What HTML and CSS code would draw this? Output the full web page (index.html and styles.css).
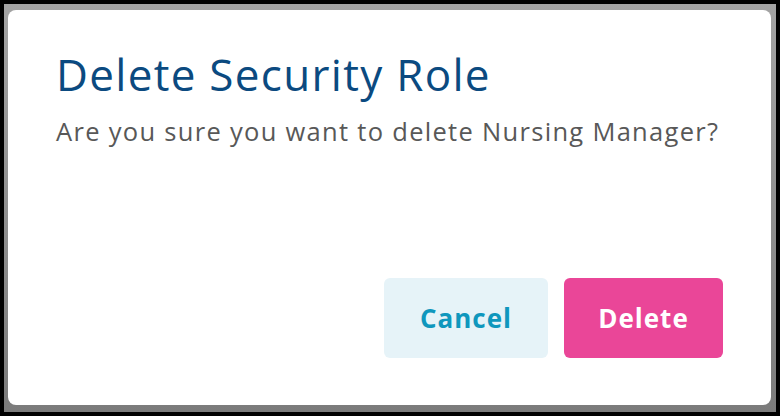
FILE: index.html
```html
<!DOCTYPE html>
<html>
<head>
<meta charset="utf-8">
<link rel="stylesheet" href="styles.css">
</head>
<body>
<div class="backdrop">
  <div class="dialog">
    <h1 class="title">Delete Security Role</h1>
    <p class="message">Are you sure you want to delete Nursing Manager?</p>
    <div class="actions">
      <button class="btn btn-cancel">Cancel</button>
      <button class="btn btn-delete">Delete</button>
    </div>
  </div>
</div>
</body>
</html>
```
FILE: styles.css
```css
html, body {
  margin: 0;
  padding: 0;
  background: #000;
}
body {
  width: 780px;
  height: 416px;
  box-sizing: border-box;
  padding: 4px 4px 4px 4px;
  font-family: "Open Sans", Lato, sans-serif;
}
.backdrop {
  width: 772px;
  height: 408px;
  box-sizing: border-box;
  padding: 6px 5px 7px 4px;
  background: linear-gradient(180deg, #a3a3a3 0%, #8c8c8c 60%, #7b7b7b 100%);
}
.dialog {
  height: 395px;
  box-sizing: border-box;
  background: #fff;
  border-radius: 8px;
  padding: 34px 48px 47px 48px;
  display: flex;
  flex-direction: column;
}
.title {
  margin: 0;
  font-size: 44px;
  font-weight: 400;
  color: #0b4a80;
  line-height: 60px;
  letter-spacing: 1.3px;
}
.message {
  margin: 10px 0 0 0;
  font-size: 25.5px;
  line-height: 34px;
  color: #585858;
  letter-spacing: 1.3px;
}
.actions {
  margin-top: auto;
  display: flex;
  justify-content: flex-end;
  gap: 16px;
}
.btn {
  height: 80px;
  border: none;
  border-radius: 6px;
  font-family: "Open Sans", Lato, sans-serif;
  font-size: 26px;
  font-weight: 700;
  letter-spacing: 1px;
  padding: 0;
}
.btn-cancel {
  width: 164px;
  background: #e6f3f8;
  color: #0f97bd;
}
.btn-delete {
  width: 159px;
  background: #ea4698;
  color: #fff;
}
```
